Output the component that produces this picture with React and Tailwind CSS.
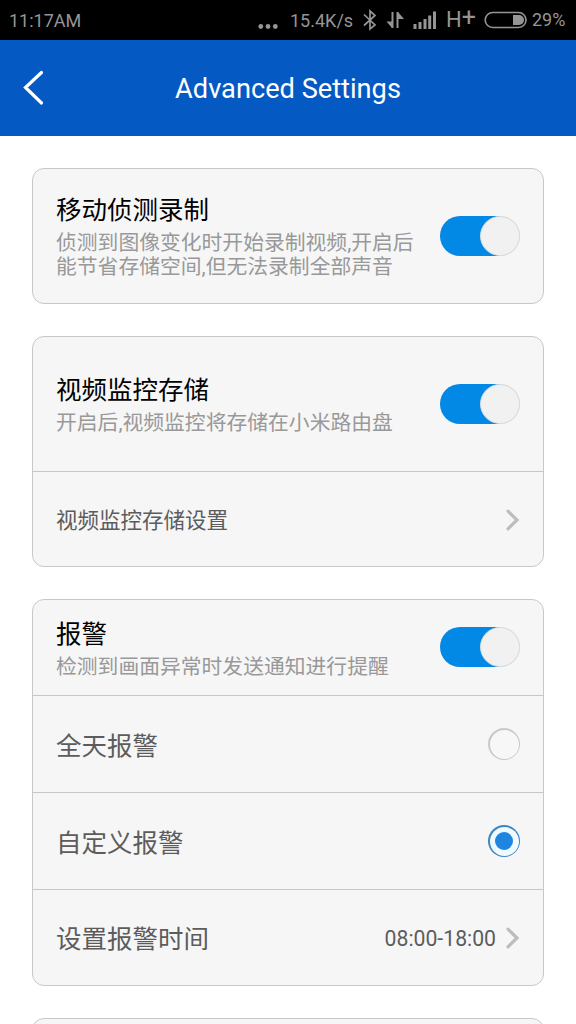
const FONT = "font-[Roboto,'Noto_Sans_CJK_SC',sans-serif]";

function Toggle() {
  return (
    <div className="flex h-10 w-20 shrink-0 justify-end rounded-full bg-[linear-gradient(to_right,#0288e5_75%,#d9dadb_75%)]">
      <div className="h-10 w-10 rounded-full border border-[#d9dadb] bg-[#f1f1f1]" />
    </div>
  );
}

function Chevron() {
  return (
    <svg className="mt-[2px] h-6 w-4 shrink-0" viewBox="0 0 16 24" fill="none" stroke="#bdbdbd" strokeWidth="3.2" strokeLinecap="round" strokeLinejoin="miter">
      <path d="M4 3.2 L13 12 L4 20.8" />
    </svg>
  );
}

function Radio({ checked }) {
  return checked ? (
    <div className="flex h-8 w-8 items-center justify-center rounded-full bg-[#3e86c2] p-[1.5px]">
      <div className="flex h-full w-full items-center justify-center rounded-full bg-[#effaff]">
        <div className="h-[18px] w-[18px] rounded-full bg-[#1e86de]" />
      </div>
    </div>
  ) : (
    <div className="h-8 w-8 rounded-full bg-[#c9c9c9] p-[1.5px]">
      <div className="h-full w-full rounded-full bg-[#f7f7f7]" />
    </div>
  );
}

function Card({ children }) {
  return (
    <section className="shrink-0 divide-y divide-[#c6c6c6] overflow-hidden rounded-xl border border-[#c8c8c8] bg-[#f6f6f6]">
      {children}
    </section>
  );
}

function SwitchRow({ title, lines, height, lift }) {
  return (
    <div className={`flex items-center justify-between px-[23px] ${height}`}>
      <div className={lift}>
        <h2 className="text-[25.5px] leading-[41px] text-black">{title}</h2>
        {lines.map((line) => (
          <p key={line} className="whitespace-nowrap text-[20.8px] leading-6 text-[#999]">{line}</p>
        ))}
      </div>
      <Toggle />
    </div>
  );
}

function Row({ label, size, height, children }) {
  return (
    <div className={`flex items-center justify-between px-[23px] text-[#5c5c5c] ${height}`}>
      <span className={size}>{label}</span>
      {children}
    </div>
  );
}

function StatusBar() {
  return (
    <div className="flex h-10 shrink-0 items-center bg-black pl-[9px] pr-[9px] text-[#959595]">
      <span className="mt-[2px] w-[72px] text-[18px] leading-10">11:17AM</span>
      <svg className="ml-[175px] h-10 w-6 shrink-0" viewBox="0 0 24 40" fill="currentColor">
        <circle cx="4.8" cy="26.5" r="2.4" />
        <circle cx="12" cy="26.5" r="2.4" />
        <circle cx="19.3" cy="26.5" r="2.4" />
      </svg>
      <span className="ml-[10px] mt-[2px] w-[63px] shrink-0 whitespace-nowrap text-[18px] leading-10">15.4K/s</span>
      <svg className="ml-[8px] h-10 w-[45px] shrink-0" viewBox="0 0 45 40" fill="none" stroke="currentColor" strokeWidth="1.7">
        <path d="M3 14.5 L14 25 L9 29 V11 L14 15.5 L3 25.5" />
        <path d="M31.5 12 V28" strokeWidth="2" />
        <path d="M32 28 H31 L25.5 21.5 H32 Z" fill="currentColor" stroke="none" />
        <path d="M36.5 12 V28" strokeWidth="2" />
        <path d="M36 12 H37 L43 19 H36 Z" fill="currentColor" stroke="none" />
      </svg>
      <svg className="ml-[7px] h-10 w-6 shrink-0" viewBox="0 0 24 40" fill="currentColor">
        <rect x="0.5" y="24" width="3" height="5" />
        <rect x="5.5" y="22" width="3" height="7" />
        <rect x="10.5" y="19" width="3" height="10" />
        <rect x="15.2" y="15.5" width="3" height="13.5" />
        <rect x="20" y="11.5" width="3" height="17.5" />
      </svg>
      <span className="ml-[9px] flex w-[30px] shrink-0 text-[22px] leading-10">H<span className="-mt-[2px] text-[25px]">+</span></span>
      <svg className="ml-[8px] h-10 w-11 shrink-0" viewBox="0 0 44 40" fill="none" stroke="currentColor" strokeWidth="1.6">
        <rect x="1.2" y="12.5" width="40.8" height="15" rx="7.5" />
        <path d="M29 15 H35 A5 5 0 0 1 35 25 H29 Z" fill="currentColor" stroke="none" />
      </svg>
      <span className="ml-[4px] w-[34px] whitespace-nowrap text-[18px] leading-10">29%</span>
    </div>
  );
}

export default function App() {
  return (
    <div className={`flex h-[1024px] w-[576px] flex-col overflow-hidden bg-white ${FONT}`}>
      <StatusBar />
      <header className="grid h-24 shrink-0 grid-cols-[64px_1fr_64px] items-center bg-[#0559c2]">
        <svg className="ml-5 h-10 w-7" viewBox="0 0 28 40" fill="none" stroke="#fff" strokeWidth="3.2" strokeLinecap="round">
          <path d="M21.5 4.5 L5.5 19.5 L21.5 35" />
        </svg>
        <h1 className="pt-[2px] text-center text-[27.2px] leading-9 text-white">Advanced Settings</h1>
      </header>
      <main className="flex flex-col gap-8 px-8 pt-8">
        <Card>
          <SwitchRow
            title="移动侦测录制"
            lines={["侦测到图像变化时开始录制视频,开启后", "能节省存储空间,但无法录制全部声音"]}
            height="h-[134px]"
            lift="pb-[3px]"
          />
        </Card>
        <Card>
          <SwitchRow
            title="视频监控存储"
            lines={["开启后,视频监控将存储在小米路由盘"]}
            height="h-[135px]"
            lift="pb-[3px]"
          />
          <Row label="视频监控存储设置" size="pt-[5px] text-[21.5px]" height="h-[94px]">
            <Chevron />
          </Row>
        </Card>
        <Card>
          <SwitchRow
            title="报警"
            lines={["检测到画面异常时发送通知进行提醒"]}
            height="h-24 pb-px"
            lift="pb-px"
          />
          <Row label="全天报警" size="pt-[5px] text-[25.5px]" height="h-[97px]">
            <Radio />
          </Row>
          <Row label="自定义报警" size="pt-[5px] text-[25.5px]" height="h-[97px]">
            <Radio checked />
          </Row>
          <Row label="设置报警时间" size="pt-[4px] text-[25.5px]" height="h-[95px]">
            <div className="flex items-center gap-2">
              <span className="pt-[2px] text-[21.2px]">08:00-18:00</span>
              <Chevron />
            </div>
          </Row>
        </Card>
        <Card>
          <div className="h-24" />
        </Card>
      </main>
    </div>
  );
}
